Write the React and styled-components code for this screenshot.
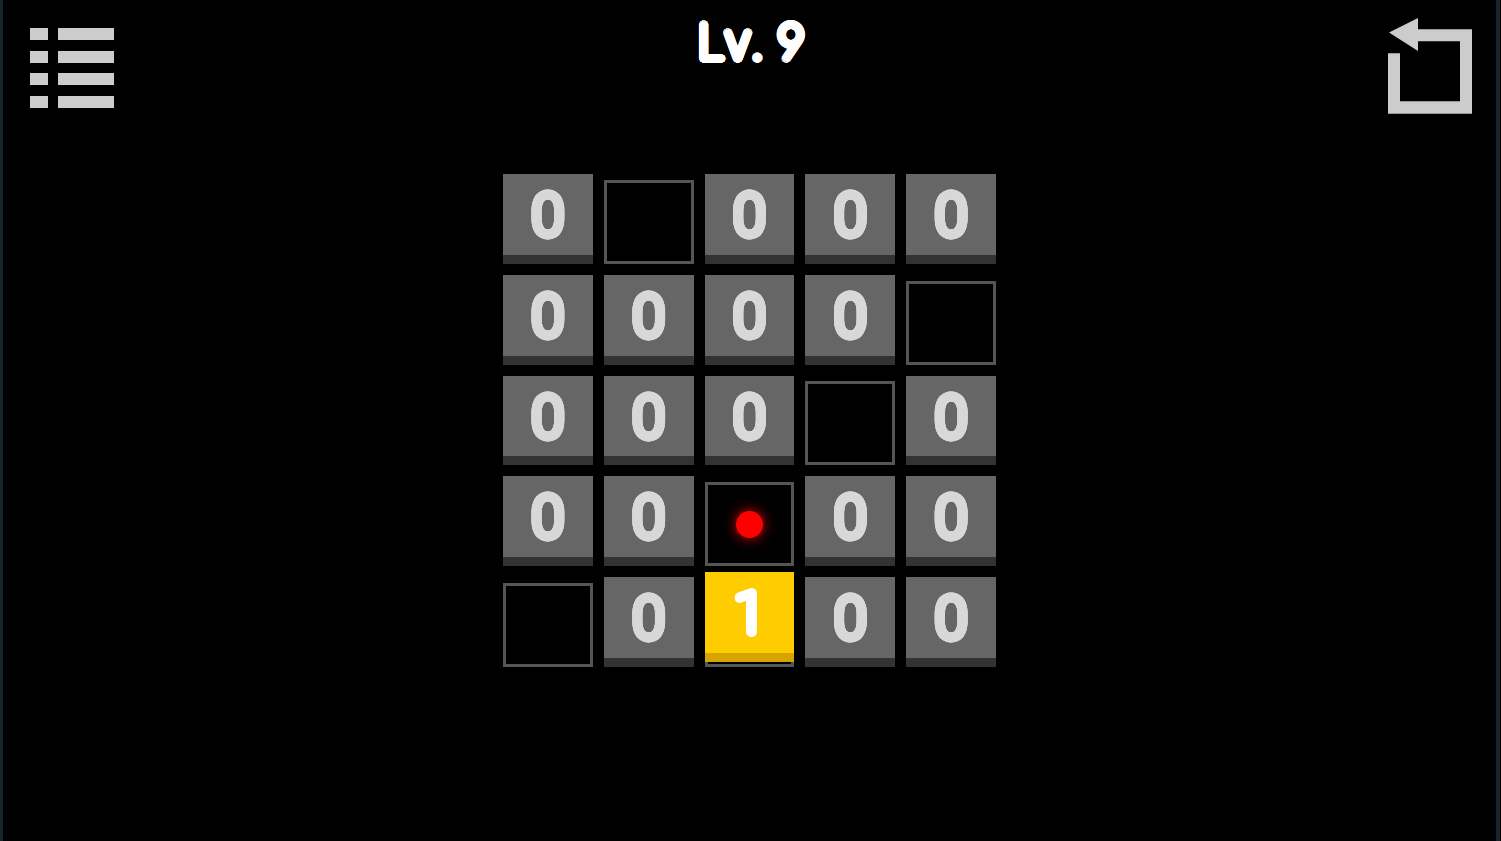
import { useState } from 'react';
import styled, { createGlobalStyle } from 'styled-components';

const GlobalStyle = createGlobalStyle`
  * {
    box-sizing: border-box;
  }

  body {
    margin: 0;
    background: #000;
    font-family: Roboto, "Liberation Sans", sans-serif;
  }
`;

// thickens a light font with round corners
const roundOutline = (radius) => {
  const shadows = [];
  for (let r = radius; r > 0; r -= 2) {
    for (let i = 0; i < 24; i += 1) {
      const angle = (i / 24) * Math.PI * 2;
      shadows.push(`${(Math.cos(angle) * r).toFixed(2)}px ${(Math.sin(angle) * r).toFixed(2)}px 0 currentColor`);
    }
  }
  return shadows.join(', ');
};

const Screen = styled.main`
  min-height: 100vh;
  margin-right: 1px;
  border-left: 3px solid #19242b;
  border-right: 4px solid #19242b;
  background: #000;
`;

const Header = styled.header`
  display: grid;
  grid-template-columns: 1fr auto 1fr;
  align-items: start;
  padding: 18px 24px 0 27px;
`;

const IconButton = styled.button`
  justify-self: ${(props) => props.$side};
  display: flex;
  padding: 0;
  border: 0;
  background: none;
  color: #ccc;
  cursor: pointer;
`;

const Title = styled.h1`
  margin: 0;
  color: #fff;
  font-family: Inter, Roboto, sans-serif;
  font-size: 48px;
  font-weight: 100;
  font-kerning: none;
  font-feature-settings: "cv04";
  line-height: 48px;
  text-shadow: ${roundOutline(4)};
`;

const Board = styled.section`
  display: grid;
  grid-template-columns: repeat(5, 1fr);
  gap: 11px;
  width: 493px;
  max-width: 94%;
  margin: 60px auto 0;
`;

const Cell = styled.div`
  position: relative;
  display: flex;
  flex-direction: column;
  justify-content: flex-end;
  aspect-ratio: 1;
`;

const Slot = styled.div`
  display: flex;
  align-items: center;
  justify-content: center;
  height: 84px;
  border: 3px solid #555;
`;

const Tile = styled.button`
  height: 100%;
  width: 100%;
  padding: 0;
  border: 0;
  border-bottom: 9px solid ${(props) => (props.$active ? '#d6a400' : '#333')};
  background: ${(props) => (props.$active ? '#fc0' : '#666')};
  color: ${(props) => (props.$active ? '#fff' : '#d8d8d8')};
  font-family: inherit;
  font-size: 58px;
  font-weight: 200;
  line-height: 82px;
  text-shadow: ${roundOutline(4)};
  cursor: pointer;
`;

const RaisedTile = styled(Tile)`
  position: absolute;
  bottom: 5px;
  left: 0;
`;

const Dot = styled.span`
  width: 27px;
  height: 27px;
  border-radius: 50%;
  background: #f00;
  box-shadow: 0 0 12px 2px rgba(255, 0, 0, 0.6);
`;

// '.' empty slot, '*' goal, '1' the raised tile
const LEVEL = [
  '0.000',
  '0000.',
  '000.0',
  '00*00',
  '.0100',
];

const MenuIcon = () => (
  <svg width="84" height="90" viewBox="0 0 84 90" fill="currentColor" aria-hidden="true">
    {[10, 33, 55, 78].map((y) => (
      <g key={y}>
        <rect x="0" y={y} width="18" height="12" />
        <rect x="28" y={y} width="56" height="12" />
      </g>
    ))}
  </svg>
);

const BackIcon = () => (
  <svg width="84" height="96" viewBox="0 0 84 96" fill="currentColor" aria-hidden="true">
    <path d="M1 14.5 30 0V11.200H84V95.700H0V35.200H12V83.200H72V23.200H30V33Z" />
  </svg>
);

const BoardCell = ({ value }) => {
  if (value === '0') {
    return <Cell><Tile>0</Tile></Cell>;
  }

  return (
    <Cell>
      <Slot>{value === '*' && <Dot />}</Slot>
      {value === '1' && <RaisedTile $active>1</RaisedTile>}
    </Cell>
  );
};

const App = () => {
  const [cells] = useState(LEVEL.join('').split(''));

  return (
    <>
      <GlobalStyle />
      <Screen>
        <Header>
          <IconButton $side="start" aria-label="Levels"><MenuIcon /></IconButton>
          <Title>Lv. 9</Title>
          <IconButton $side="end" aria-label="Undo"><BackIcon /></IconButton>
        </Header>
        <Board>
          {cells.map((value, index) => <BoardCell key={index} value={value} />)}
        </Board>
      </Screen>
    </>
  );
};

export default App;
